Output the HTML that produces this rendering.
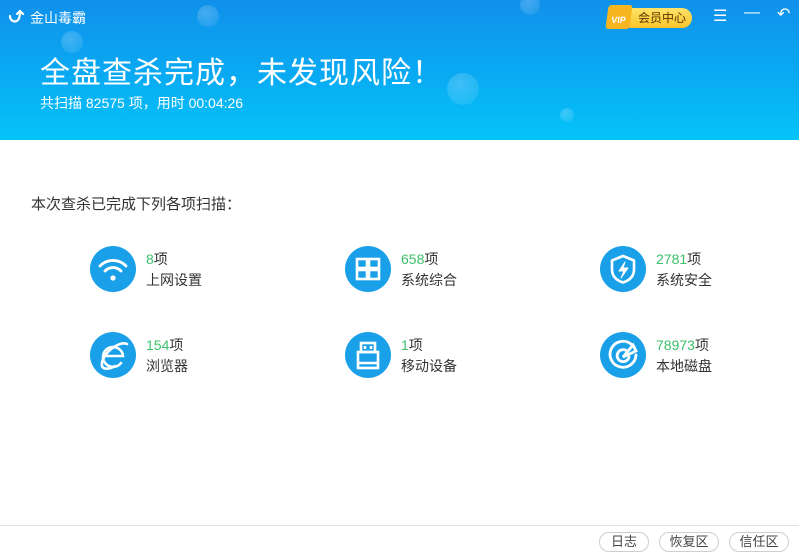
<!DOCTYPE html>
<html><head><meta charset="utf-8"><style>
*{margin:0;padding:0;box-sizing:border-box}
body{width:799px;height:559px;overflow:hidden;background:#fff;font-family:"Liberation Sans","Noto Sans CJK SC",sans-serif;position:relative;color:#333}
.hd{position:absolute;left:0;top:0;width:799px;height:140px;background:linear-gradient(180deg,#1090ea 0%,#0aa8f2 50%,#04c4f8 100%);overflow:hidden}
.b{position:absolute;border-radius:50%;background:radial-gradient(circle at 40% 35%,rgba(255,255,255,.22),rgba(255,255,255,.05))}
.logo{position:absolute;left:30px;top:8px;color:#fff;font-size:14px}
.t1{position:absolute;left:40px;top:48px;color:#fff;font-size:30px;letter-spacing:1px}
.t2{position:absolute;left:40px;top:93px;color:#fff;font-size:14px}
.vip{position:absolute;left:622px;top:8px;width:70px;height:20px;border-radius:10px;background:linear-gradient(#ffe36a,#f8c52a);font-size:12px;color:#5a3500;padding-left:16px;line-height:20px}
.ctl{position:absolute;top:6px;color:#fff;font-size:16px}
.lbl{position:absolute;left:31px;top:193px;font-size:15px;color:#333}
.it{position:absolute;width:200px;height:50px}
.ic{position:absolute;left:0;top:0;width:46px;height:46px;border-radius:50%;background:#1aa0e8}
.ic svg{position:absolute;left:0;top:0}
.n{position:absolute;left:56px;top:3px;font-size:14px;color:#333}
.n span{color:#3cc16a}
.l{position:absolute;left:56px;top:24px;font-size:14px;color:#333}
.ft{position:absolute;left:0;top:525px;width:799px;border-top:1px solid #e2e2e2}
.btn{position:absolute;top:532px;height:20px;border:1px solid #cfcfcf;border-radius:10px;font-size:13px;color:#444;text-align:center;line-height:18px}
</style></head><body>
<div class="hd">
<div class="b" style="left:197px;top:5px;width:22px;height:22px"></div>
<div class="b" style="left:61px;top:31px;width:22px;height:22px"></div>
<div class="b" style="left:447px;top:73px;width:32px;height:32px"></div>
<div class="b" style="left:560px;top:108px;width:14px;height:14px"></div>
<div class="b" style="left:520px;top:-5px;width:20px;height:20px"></div>
<div class="logo"><svg style="position:absolute;left:-22px;top:1px" width="18" height="16" fill="none" stroke="#fff" stroke-width="2.2" stroke-linecap="round"><path d="M2 7c0 5 5 7 8 4c2-2 2-6 2-9"/><path d="M9 5l3-3l3 3"/></svg>金山毒霸</div>
<div class="t1">全盘查杀完成，未发现风险！</div>
<div class="t2">共扫描 82575 项，用时 00:04:26</div>
<div class="vip">会员中心</div>
<div style="position:absolute;left:607px;top:5px;width:24px;height:24px;background:#f7b620;border-radius:3px;transform:skew(-8deg);color:#fff;font-size:9px;font-weight:bold;text-align:center;line-height:30px">VIP</div>
<div class="ctl" style="left:713px">☰</div>
<div class="ctl" style="left:744px;top:4px">—</div>
<div class="ctl" style="left:777px;top:4px">↶</div>
</div>
<div class="lbl">本次查杀已完成下列各项扫描：</div>

<div class="it" style="left:90px;top:246px"><div class="ic"><svg width="46" height="46" fill="none" stroke="#fff" stroke-width="2.8" stroke-linecap="round"><path d="M10 20a18 18 0 0 1 26 0"/><path d="M15 25a11 11 0 0 1 16 0"/><circle cx="23" cy="32" r="2.6" fill="#fff" stroke="none"/></svg></div><div class="n"><span>8</span>项</div><div class="l">上网设置</div></div>
<div class="it" style="left:345px;top:246px"><div class="ic"><svg width="46" height="46" fill="none" stroke="#fff" stroke-width="2.6"><rect x="12" y="13" width="10" height="9"/><rect x="24" y="13" width="10" height="9"/><rect x="12" y="24" width="10" height="9"/><rect x="24" y="24" width="10" height="9"/></svg></div><div class="n"><span>658</span>项</div><div class="l">系统综合</div></div>
<div class="it" style="left:600px;top:246px"><div class="ic"><svg width="46" height="46" fill="none" stroke="#fff" stroke-width="2.6" stroke-linejoin="round"><path d="M23 10l11 4.5v9c0 7-5 11-11 13c-6-2-11-6-11-13v-9z"/><path d="M25 16l-6 9h5l-3 7l7-10h-5z" fill="#fff" stroke-width="1"/></svg></div><div class="n"><span>2781</span>项</div><div class="l">系统安全</div></div>

<div class="it" style="left:90px;top:332px"><div class="ic"><svg width="46" height="46" fill="none" stroke="#fff" stroke-width="2.6" stroke-linecap="round"><path d="M13 24h20a10 10 0 1 0-2 7"/><path d="M37 12c-8-4-27 11-25 22c1 4 9 3 13 0"/></svg></div><div class="n"><span>154</span>项</div><div class="l">浏览器</div></div>
<div class="it" style="left:345px;top:332px"><div class="ic"><svg width="46" height="46" fill="none" stroke="#fff" stroke-width="2.6"><rect x="16" y="11" width="14" height="9"/><rect x="13" y="20" width="20" height="16"/><path d="M20 14v3M26 14v3"/><path d="M13 31h20"/></svg></div><div class="n"><span>1</span>项</div><div class="l">移动设备</div></div>
<div class="it" style="left:600px;top:332px"><div class="ic"><svg width="46" height="46" fill="none" stroke="#fff" stroke-width="2.8" stroke-linecap="round"><path d="M31 12a13 13 0 1 0 5 11"/><path d="M27 19a6 6 0 1 0 2 6"/><path d="M23 25l10-12l3 6z"/></svg></div><div class="n"><span>78973</span>项</div><div class="l">本地磁盘</div></div>

<div class="ft"></div>
<div class="btn" style="left:599px;width:50px">日志</div>
<div class="btn" style="left:659px;width:60px">恢复区</div>
<div class="btn" style="left:729px;width:60px">信任区</div>
</body></html>
